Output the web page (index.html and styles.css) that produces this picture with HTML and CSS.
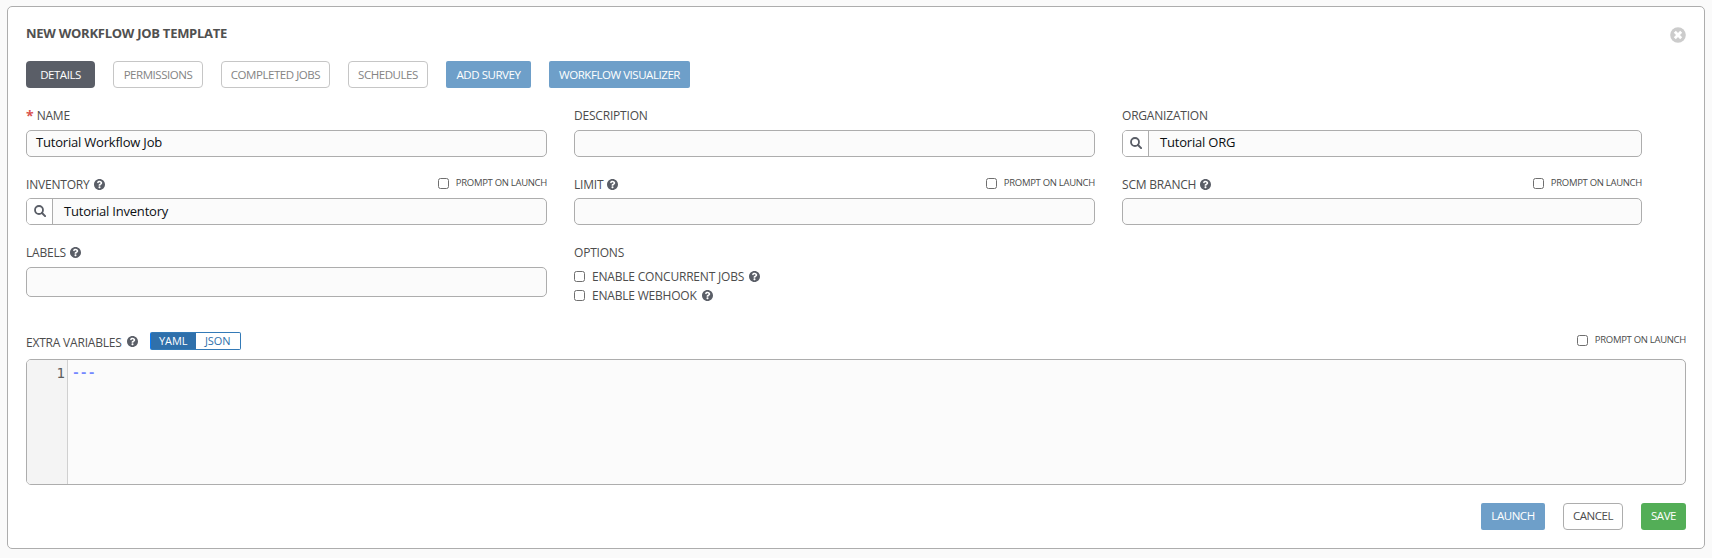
FILE: index.html
```html
<!DOCTYPE html>
<html lang="en">
<head>
<meta charset="utf-8">
<title>New Workflow Job Template</title>
<link rel="stylesheet" href="styles.css">
</head>
<body>
<svg class="sprite" aria-hidden="true">
  <symbol id="help" viewBox="8 8 496 496"><path fill="currentColor" d="M504 256c0 136.997-111.043 248-248 248S8 392.997 8 256C8 119.083 119.043 8 256 8s248 111.083 248 248zM262.655 90c-54.497 0-89.255 22.957-116.549 63.758-3.536 5.286-2.353 12.415 2.715 16.258l34.699 26.31c5.205 3.947 12.621 3.008 16.665-2.122 17.864-22.658 30.113-35.797 57.303-35.797 20.429 0 45.698 13.148 45.698 32.958 0 14.976-12.363 22.667-32.534 33.976C247.128 238.528 216 254.941 216 296v4c0 6.627 5.373 12 12 12h56c6.627 0 12-5.373 12-12v-1.333c0-28.462 83.186-29.647 83.186-106.667 0-58.002-60.165-102-116.531-102zM256 338c-25.365 0-46 20.635-46 46 0 25.364 20.635 46 46 46s46-20.636 46-46c0-25.365-20.635-46-46-46z"/></symbol>
  <symbol id="search" viewBox="0 0 12 12"><circle cx="5" cy="5" r="4" fill="none" stroke="currentColor" stroke-width="1.8"/><path d="M8 8l3.1 3.1" stroke="currentColor" stroke-width="2" stroke-linecap="round"/></symbol>
  <symbol id="close" viewBox="0 0 16 16"><circle cx="8" cy="8" r="7.8" fill="currentColor"/><path d="M4.8 4.8l6.4 6.4M11.2 4.8l-6.4 6.4" stroke="#fff" stroke-width="2.8"/></symbol>
</svg>
<main class="panel">
  <header class="head">
    <h1 class="title">NEW WORKFLOW JOB TEMPLATE</h1>
    <svg class="close"><use href="#close"/></svg>
  </header>
  <nav class="tabs">
    <span class="btn tab-active w-details">DETAILS</span>
    <span class="btn tab w-permissions">PERMISSIONS</span>
    <span class="btn tab w-completed">COMPLETED JOBS</span>
    <span class="btn tab w-schedules">SCHEDULES</span>
    <span class="btn primary w-survey">ADD SURVEY</span>
    <span class="btn primary w-visualizer">WORKFLOW VISUALIZER</span>
  </nav>
  <div class="form">
    <div class="field first">
      <div class="label-row"><span class="star">*</span><span class="label">NAME</span></div>
      <div class="input"><span class="value">Tutorial Workflow Job</span></div>
    </div>
    <div class="field first">
      <div class="label-row"><span class="label">DESCRIPTION</span></div>
      <div class="input"></div>
    </div>
    <div class="field first">
      <div class="label-row"><span class="label">ORGANIZATION</span></div>
      <div class="input"><span class="lookup"><svg class="search"><use href="#search"/></svg></span><span class="value">Tutorial ORG</span></div>
    </div>
    <div class="field">
      <div class="label-row"><span class="label">INVENTORY</span><svg class="help"><use href="#help"/></svg><span class="prompt"><i class="check"></i><span class="small">PROMPT ON LAUNCH</span></span></div>
      <div class="input"><span class="lookup"><svg class="search"><use href="#search"/></svg></span><span class="value">Tutorial Inventory</span></div>
    </div>
    <div class="field">
      <div class="label-row"><span class="label">LIMIT</span><svg class="help"><use href="#help"/></svg><span class="prompt"><i class="check"></i><span class="small">PROMPT ON LAUNCH</span></span></div>
      <div class="input"></div>
    </div>
    <div class="field">
      <div class="label-row"><span class="label">SCM BRANCH</span><svg class="help"><use href="#help"/></svg><span class="prompt"><i class="check"></i><span class="small">PROMPT ON LAUNCH</span></span></div>
      <div class="input"></div>
    </div>
    <div class="field">
      <div class="label-row tall"><span class="label">LABELS</span><svg class="help"><use href="#help"/></svg></div>
      <div class="input labels"></div>
    </div>
    <div class="field">
      <div class="label-row tall"><span class="label">OPTIONS</span></div>
      <div class="options">
        <div class="option"><i class="check"></i><span class="label">ENABLE CONCURRENT JOBS</span><svg class="help"><use href="#help"/></svg></div>
        <div class="option"><i class="check"></i><span class="label">ENABLE WEBHOOK</span><svg class="help"><use href="#help"/></svg></div>
      </div>
    </div>
  </div>
  <section class="vars">
    <div class="vars-head">
      <span class="label vars-label">EXTRA VARIABLES</span><svg class="help"><use href="#help"/></svg>
      <div class="toggle"><span class="yaml">YAML</span><span class="json">JSON</span></div>
      <span class="prompt"><i class="check"></i><span class="small">PROMPT ON LAUNCH</span></span>
    </div>
    <div class="editor"><div class="gutter">1</div><div class="code">---</div></div>
  </section>
  <footer class="foot">
    <span class="btn primary w-launch">LAUNCH</span>
    <span class="btn cancel w-cancel">CANCEL</span>
    <span class="btn save w-save">SAVE</span>
  </footer>
</main>
</body>
</html>
```
FILE: styles.css
```css
* { box-sizing: border-box; }
body { margin: 0; height: 558px; padding: 6px 7px 9px; background: #fafafa; font-family: "Open Sans", "Noto Sans", sans-serif; color: #4c4c4c; white-space: nowrap; overflow: hidden; }
.sprite { display: none; }
.panel { height: 543px; background: #fff; border: 1px solid #adadad; border-radius: 5px; padding: 20px 18px 0; }
.head { display: flex; justify-content: space-between; height: 34px; }
.title { margin: 0; font-size: 13px; line-height: 12px; font-weight: 700; letter-spacing: -0.27px; color: #505050; }
.close { width: 16px; height: 16px; color: #ccc; }
.tabs { display: flex; gap: 18px; }
.btn { display: flex; align-items: center; justify-content: center; height: 27px; border-radius: 4px; font-size: 11.5px; line-height: 16px; letter-spacing: -0.45px; padding-top: 1px; }
.tab-active { background: #5a5e67; color: #fff; }
.tab { border: 1px solid #c6c6c6; color: #848484; }
.primary { background: #6e9fc9; color: #fff; border-radius: 2px; }
.cancel { border: 1px solid #adadad; color: #4c4c4c; }
.save { background: #53ae57; color: #fff; border-radius: 3px; }
.w-details { width: 69px; }
.w-permissions { width: 90px; }
.w-completed { width: 109px; }
.w-schedules { width: 80px; }
.w-survey { width: 85px; }
.w-visualizer { width: 141px; }
.w-launch { width: 64px; }
.w-cancel { width: 60px; }
.w-save { width: 45px; }
.form { display: grid; grid-template-columns: 521px 521px 520px; column-gap: 27px; grid-template-rows: 68px 68px 88px; margin-top: 20px; }
.label-row { display: flex; align-items: center; height: 22px; padding-bottom: 4px; }
.first .label-row { padding-bottom: 6px; }
.label-row.tall { height: 23px; padding-bottom: 5px; }
.label { font-size: 12px; line-height: 16px; letter-spacing: -0.2px; }
.star { font-size: 14px; line-height: 16px; font-weight: 700; color: #d9534f; margin-right: 3px; }
.help { width: 11px; height: 11px; margin-left: 5px; color: #5a5e67; }
.label-row .help { margin: -1px 0 0 4px; }
.prompt { display: flex; align-items: center; margin: -3px 0 0 auto; }
.small { font-size: 9.5px; line-height: 12px; letter-spacing: -0.3px; margin: -2px 0 0 7px; color: #4c4c4c; }
.check { display: block; width: 11px; height: 11px; border: 1px solid #6f6f6f; border-radius: 2.5px; background: #fff; }
.input { display: flex; align-items: center; height: 27px; background: #fbfbfb; border: 1px solid #adadad; border-radius: 5px; overflow: hidden; font-size: 13px; letter-spacing: -0.2px; color: #0c0f12; }
.value { padding-left: 9px; line-height: 18px; margin-top: -1px; }
.first .value { margin-top: -3px; }
.lookup { display: flex; align-items: center; justify-content: center; width: 26px; height: 25px; background: #fff; border-right: 1px solid #adadad; }
.lookup + .value { padding-left: 11px; }
.search { width: 12px; height: 12px; margin-top: -1px; color: #5a5e67; }
.labels { height: 30px; }
.option { display: flex; align-items: center; height: 19px; }
.option .label { margin-left: 7px; }
.vars-head { display: flex; align-items: center; height: 27px; padding-bottom: 9px; }
.vars-label { padding-top: 3px; }
.vars-head .prompt { margin-top: -1px; }
.toggle { display: flex; width: 91px; height: 18px; margin-left: 12px; border: 1px solid #337ab7; border-left-color: #0b7bf5; border-radius: 2px; font-size: 11px; line-height: 16px; letter-spacing: -0.1px; text-align: center; }
.yaml { width: 45px; background: #2f70ab; color: #fff; }
.json { flex: 1; color: #2f70ab; }
.editor { display: flex; height: 126px; border: 1px solid #adadad; border-radius: 5px; background: #fbfbfb; overflow: hidden; font: 13px/20px "DejaVu Sans Mono", monospace; }
.gutter { width: 41px; padding: 3px 2px 0 0; text-align: right; font-size: 14px; color: #5e5e5e; background: #f4f4f4; border-right: 1px solid #d0d0d0; }
.code { padding: 3px 0 0 4px; font-weight: 700; color: #7488ff; }
.foot { display: flex; justify-content: flex-end; gap: 18px; margin-top: 18px; }
.foot .btn { padding-top: 0; padding-bottom: 1px; }
```
